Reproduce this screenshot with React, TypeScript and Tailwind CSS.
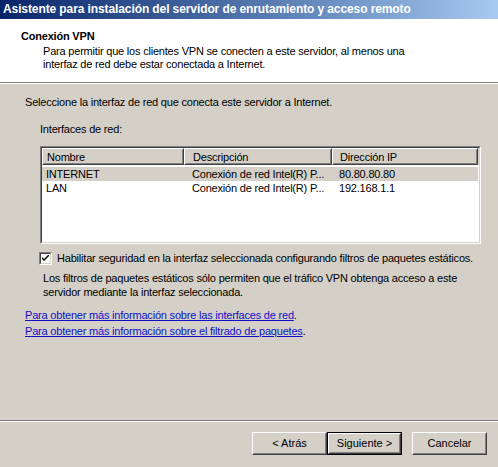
import React from "react";

const font = { fontFamily: '"Liberation Sans", Arial, sans-serif' };

function Bevel({ children, className = "" }: { children: React.ReactNode; className?: string }) {
  // classic raised 3D edge used by header cells and push buttons
  return (
    <div className={`border border-t-white border-l-white border-b-[#404040] border-r-[#404040] ${className}`}>
      <div className="h-full w-full border border-t-[#d4d0c8] border-l-[#d4d0c8] border-b-[#808080] border-r-[#808080]">
        {children}
      </div>
    </div>
  );
}

function PushButton({ label, isDefault = false }: { label: string; isDefault?: boolean }) {
  const inner = (
    <Bevel className="h-full w-full">
      <div className="flex h-full w-full items-center justify-center text-[11px] text-black">{label}</div>
    </Bevel>
  );
  return (
    <div className="h-[23px] w-[75px]">
      {isDefault ? <div className="h-full w-full border border-black">{inner}</div> : inner}
    </div>
  );
}

function Checkbox() {
  return (
    <div className="h-[13px] w-[13px] shrink-0 border border-t-[#808080] border-l-[#808080] border-b-white border-r-white">
      <div className="flex h-full w-full items-center justify-center border border-t-[#404040] border-l-[#404040] border-b-[#d4d0c8] border-r-[#d4d0c8] bg-white">
        <svg width="7" height="7" viewBox="0 0 7 7">
          <path d="M0 2 L0 4 L2 6 L7 1 L7 -1 L2 4 Z" fill="#000" />
        </svg>
      </div>
    </div>
  );
}

const rows = [
  { name: "INTERNET", desc: "Conexión de red Intel(R) P...", ip: "80.80.80.80", selected: true },
  { name: "LAN", desc: "Conexión de red Intel(R) P...", ip: "192.168.1.1", selected: false },
];

export default function App() {
  return (
    <div style={font} className="flex h-[467px] w-[498px] flex-col overflow-hidden bg-[#d4d0c8] text-[11px] tracking-[-0.2px] text-black">
      {/* caption */}
      <div className="h-[19px] shrink-0 bg-gradient-to-r from-[#0a246a] to-[#a6caf0] pl-[3px] text-[12px] font-bold leading-[19px] tracking-[-0.1px] text-white">
        Asistente para instalación del servidor de enrutamiento y acceso remoto
      </div>

      {/* wizard header */}
      <div className="h-[64px] shrink-0 border-b border-[#808080] bg-white pl-[21px] pt-[10px]">
        <div className="text-[11px] font-bold leading-[14px]">Conexión VPN</div>
        <div className="mt-[2px] pl-[22px] leading-[13px]">
          <div>Para permitir que los clientes VPN se conecten a este servidor, al menos una</div>
          <div>interfaz de red debe estar conectada a Internet.</div>
        </div>
      </div>
      <div className="h-px shrink-0 bg-white" />

      {/* body */}
      <div className="flex flex-1 flex-col">
        <div className="ml-[25px] mt-[12px] leading-[13px]">
          Seleccione la interfaz de red que conecta este servidor a Internet.
        </div>
        <div className="ml-[40px] mt-[14px] leading-[13px]">Interfaces de red:</div>

        {/* list view */}
        <div className="ml-[40px] mt-[10px] h-[98px] w-[441px] border border-t-[#808080] border-l-[#808080] border-b-white border-r-white">
          <div className="h-full w-full border border-t-[#404040] border-l-[#404040] border-b-[#d4d0c8] border-r-[#d4d0c8] bg-white">
            <div className="flex h-[17px] bg-[#d4d0c8]">
              <Bevel className="h-full w-[142px]">
                <div className="pl-[3px] leading-[15px]">Nombre</div>
              </Bevel>
              <Bevel className="h-full w-[148px]">
                <div className="pl-[7px] leading-[15px]">Descripción</div>
              </Bevel>
              <Bevel className="h-full w-[146px]">
                <div className="pl-[6px] leading-[15px]">Dirección IP</div>
              </Bevel>
            </div>
            <div className="pt-[2px]">
              {rows.map((r) => (
                <div key={r.name} className={`flex h-[14px] w-[436px] leading-[14px] ${r.selected ? "bg-[#d4d0c8]" : ""}`}>
                  <div className="w-[142px] pl-[4px]">{r.name}</div>
                  <div className="w-[148px] pl-[8px]">{r.desc}</div>
                  <div className="w-[146px] pl-[7px]">{r.ip}</div>
                </div>
              ))}
            </div>
          </div>
        </div>

        <div className="ml-[39px] mt-[8px] flex items-center">
          <Checkbox />
          <div className="ml-[5px] leading-[13px]">
            Habilitar seguridad en la interfaz seleccionada configurando filtros de paquetes estáticos.
          </div>
        </div>
        <div className="ml-[43px] mt-[6px] leading-[14px]">
          <div>Los filtros de paquetes estáticos sólo permiten que el tráfico VPN obtenga acceso a este</div>
          <div>servidor mediante la interfaz seleccionada.</div>
        </div>

        <div className="ml-[25px] mt-[8px] leading-[16px]">
          <div>
            <span className="text-[#1010c8] underline">Para obtener más información sobre las interfaces de red</span>.
          </div>
          <div>
            <span className="text-[#1010c8] underline">Para obtener más información sobre el filtrado de paquetes</span>.
          </div>
        </div>

        <div className="flex-1" />

        {/* separator and buttons */}
        <div className="h-px bg-[#808080]" />
        <div className="h-px bg-white" />
        <div className="flex h-[45px] items-start pl-[252px] pt-[10px] tracking-normal">
          <PushButton label="< Atrás" />
          <PushButton label="Siguiente >" isDefault />
          <div className="ml-[10px]">
            <PushButton label="Cancelar" />
          </div>
        </div>
      </div>
    </div>
  );
}
